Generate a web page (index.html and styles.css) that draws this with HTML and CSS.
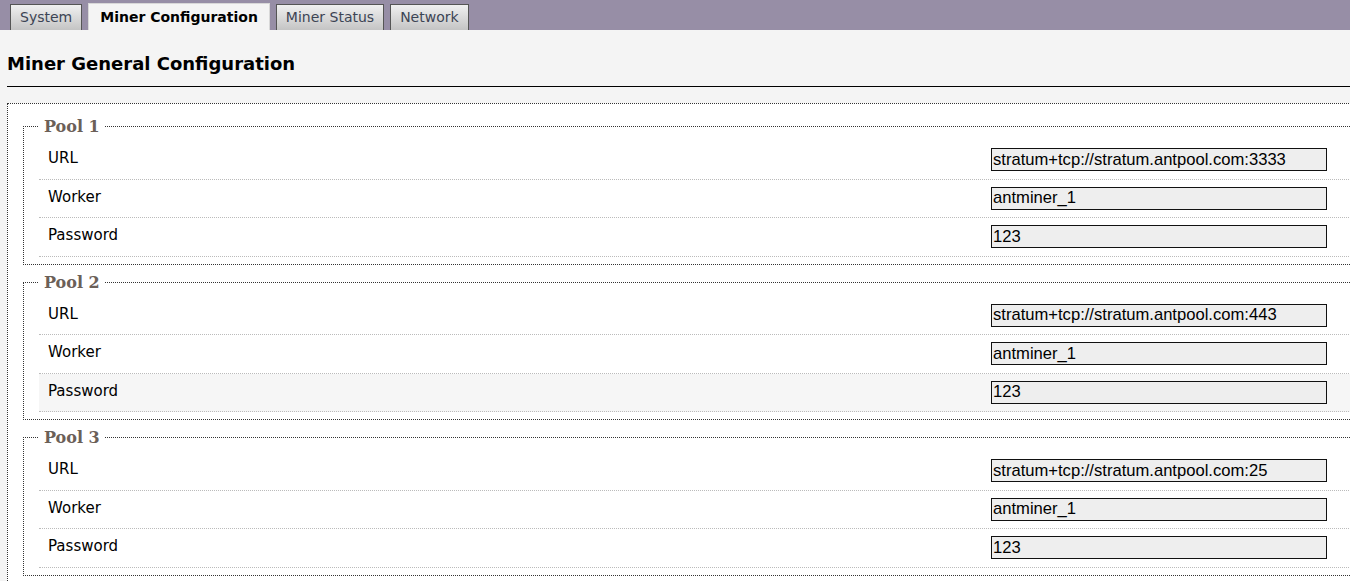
FILE: index.html
```html
<!DOCTYPE html>
<html lang="en">
  <head>
    <meta charset="UTF-8" />
    <title>Miner Configuration</title>
    <link rel="stylesheet" href="styles.css">
  </head>
  <body>
    <div class="tabbar">
      <ul class="tabs">
        <li><a href="#">System</a></li>
        <li class="active"><a href="#">Miner Configuration</a></li>
        <li><a href="#">Miner Status</a></li>
        <li><a href="#">Network</a></li>
      </ul>
    </div>

    <div class="maincontent">
      <h2>Miner General Configuration</h2>

      <fieldset class="cbi-section">
        <fieldset class="pool">
          <legend>Pool 1</legend>
          <div class="row"><label>URL</label><input type="text" value="stratum+tcp://stratum.antpool.com:3333"></div>
          <div class="row"><label>Worker</label><input type="text" value="antminer_1"></div>
          <div class="row"><label>Password</label><input type="text" value="123"></div>
        </fieldset>

        <fieldset class="pool">
          <legend>Pool 2</legend>
          <div class="row"><label>URL</label><input type="text" value="stratum+tcp://stratum.antpool.com:443"></div>
          <div class="row"><label>Worker</label><input type="text" value="antminer_1"></div>
          <div class="row hover"><label>Password</label><input type="text" value="123"></div>
        </fieldset>

        <fieldset class="pool">
          <legend>Pool 3</legend>
          <div class="row"><label>URL</label><input type="text" value="stratum+tcp://stratum.antpool.com:25"></div>
          <div class="row"><label>Worker</label><input type="text" value="antminer_1"></div>
          <div class="row"><label>Password</label><input type="text" value="123"></div>
        </fieldset>
      </fieldset>
    </div>
  </body>
</html>
```

FILE: styles.css
```css
html,
body {
  margin: 0;
  overflow: hidden;
}

body {
  background-color: #f4f4f4;
  font-family: "DejaVu Sans", Verdana, sans-serif;
  font-size: 15px;
  color: #000;
}

.tabbar {
  background-color: #978ea6;
  height: 30px;
}

.tabs {
  display: flex;
  gap: 6px;
  margin: 0;
  padding: 4px 0 0 10px;
  list-style: none;
  font-size: 14px;
}

.tabs li {
  height: 26px;
  box-sizing: border-box;
  border: 1px solid #555;
  border-bottom: none;
  background: linear-gradient(#f0f0f0, #c4c4c4);
}

.tabs a {
  display: block;
  padding: 4px 9px 0 9px;
  color: #3c4454;
  text-decoration: none;
}

.tabs li.active {
  height: 27px;
  margin-top: -1px;
  border-color: #d8d8d8;
  background: #f4f4f4;
}

.tabs li.active a {
  padding-top: 5px;
  padding-inline: 11px;
  color: #000;
  font-weight: bold;
}

.maincontent {
  width: 1420px;
  padding: 0 7px;
}

h2 {
  margin: 0;
  padding: 23px 0 12px 0;
  font-size: 18px;
  border-bottom: 1px solid #000;
}

.cbi-section {
  margin: 16px 0 0 0;
  padding: 13px 0 8px 15px;
  border: 1px dotted #333;
  background-color: #fff;
}

.pool {
  margin: 0 0 8px 0;
  padding: 5px 0 7px 15px;
  border: 1px dotted #333;
}

.pool legend {
  padding: 0 5px;
  font-family: "DejaVu Serif", serif;
  font-weight: bold;
  font-size: 16px;
  color: #6b6058;
}

.row {
  display: grid;
  grid-template-columns: 952px 336px;
  align-items: center;
  height: 37.5px;
  border-bottom: 1px dotted #bbb;
}

.row.hover {
  background-color: #f6f6f6;
}

.row label {
  padding: 0 0 3px 9px;
}

.row input {
  box-sizing: border-box;
  width: 336px;
  height: 23px;
  padding: 0 1px;
  border: 1px solid #111;
  background-color: #eee;
  font-family: "Liberation Sans", Arial, sans-serif;
  font-size: 16.6px;
  color: #000;
}
```
